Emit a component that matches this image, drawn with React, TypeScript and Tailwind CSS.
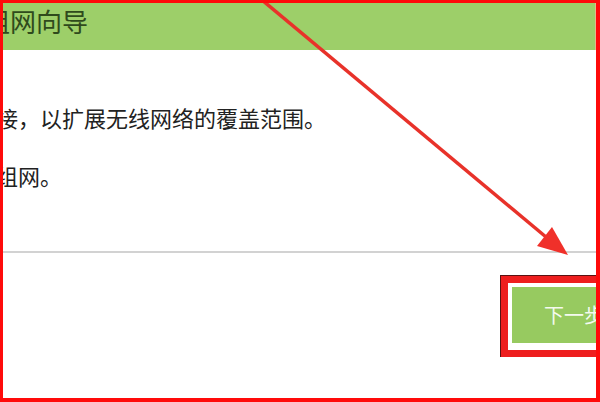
export default function App() {
  const cjk = { fontFamily: '"Noto Sans CJK SC", "Noto Sans", sans-serif' };

  return (
    <div className="relative w-[600px] h-[402px] bg-white border-t-[3px] border-l-[3px] border-r-4 border-b-4 border-[#ff0a0a] overflow-hidden" style={cjk}>
      {/* header bar */}
      <div className="h-[47px] bg-[#9dcf69] pt-[5px] overflow-hidden border-r border-[#e3b98a]">
        <h1 className="-ml-[19px] text-[26px] leading-[26px] tracking-[0px] text-[#2f4a1c] whitespace-nowrap">组网向导</h1>
      </div>

      {/* body text */}
      <div className="h-[201px] pt-[56px] overflow-hidden">
        <p className="-ml-[7px] text-[22px] leading-[22px] text-[#222] whitespace-nowrap">接，以扩展无线网络的覆盖范围。</p>
        <p className="-ml-[7px] mt-[36px] text-[22px] leading-[22px] text-[#222] whitespace-nowrap">组网。</p>
      </div>

      <div className="h-[2px] bg-[#d2d2d2]" />

      {/* footer with highlighted button */}
      <div className="flex pt-[22px] pl-[497px] overflow-hidden">
        <div className="shrink-0 w-[140px] bg-[#ee1e1e] border-t border-l border-[#5a1212] pt-[7px] pb-[7px] pl-[7px]">
          <div className="bg-white pt-[4px] pb-[7px] pl-[4px]">
            <div className="h-[56px] bg-[#97ca60] flex items-center pl-[32px]">
              <span className="text-[20px] leading-[20px] text-[#f4faee] whitespace-nowrap">下一步</span>
            </div>
          </div>
        </div>
      </div>

      {/* red annotation arrow */}
      <svg className="absolute -top-[3px] -left-[3px] pointer-events-none" width="600" height="402" viewBox="0 0 600 402">
        <line x1="262" y1="0" x2="546" y2="237" stroke="#e8322a" strokeWidth="3.5" />
        <polygon points="568,255 537,246 552,227" fill="#f0302a" />
      </svg>
    </div>
  );
}
